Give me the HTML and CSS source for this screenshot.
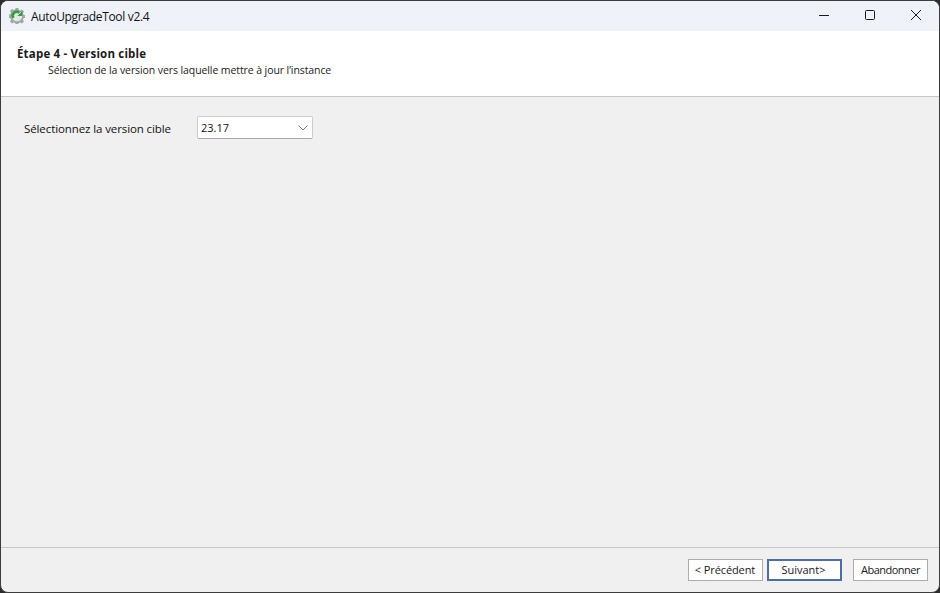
FILE: index.html
```html
<!DOCTYPE html>
<html lang="fr">
<head>
<meta charset="utf-8">
<title>AutoUpgradeTool v2.4</title>
<link rel="stylesheet" href="styles.css">
</head>
<body>
<div class="window">
  <div class="titlebar">
    <svg class="app-icon" width="16" height="16" viewBox="0 0 16 16">
      <path fill="#a4a6a4" d="M6.6 0h2.800l.4 2 1.500.6 1.700-1.100 2 2-1.100 1.700.6 1.500 2 .4v2.800l-2 .4-.6 1.500 1.100 1.700-2 2-1.700-1.100-1.500.6-.4 2H6.600l-.4-2-1.500-.6-1.700 1.100-2-2 1.100-1.700-.6-1.500-2-.4V6.600l2-.4.6-1.500-1.100-1.700 2-2 1.700 1.100 1.500-.6z"/>
      <circle cx="8" cy="8" r="5.200" fill="#e4e8e4"/>
      <path fill="none" stroke="#2f9e3f" stroke-width="2.600" d="M4.400 10A4 4 0 0 1 10.400 4.800"/>
      <path fill="#2f9e3f" d="M8.400 8h5V3z"/>
    </svg>
    <span class="app-title">AutoUpgradeTool v2.4</span>
    <div class="controls">
      <svg class="ctl" width="46" height="30" viewBox="0 0 46 30"><path d="M18 14.500h10" stroke="#1a1a1a" fill="none"/></svg>
      <svg class="ctl" width="46" height="30" viewBox="0 0 46 30"><rect x="18.500" y="9.500" width="9" height="9" rx="1" fill="none" stroke="#1a1a1a"/></svg>
      <svg class="ctl" width="46" height="30" viewBox="0 0 46 30"><path d="M18 9l10 10M28 9L18 19" stroke="#1a1a1a" fill="none"/></svg>
    </div>
  </div>
  <header class="step-header">
    <div class="step-title">Étape 4 - Version cible</div>
    <div class="step-sub">Sélection de la version vers laquelle mettre à jour l’instance</div>
  </header>
  <main class="content">
    <label class="field-label">Sélectionnez la version cible</label>
    <div class="combo">
      <span>23.17</span>
      <svg class="combo-arrow" width="10" height="6" viewBox="0 0 10 6"><path d="M.5.500L5 5 9.500.500" fill="none" stroke="#777"/></svg>
    </div>
  </main>
  <footer class="footer">
    <button class="btn btn-prev">&lt; Précédent</button>
    <button class="btn btn-next">Suivant&gt;</button>
    <button class="btn btn-abort">Abandonner</button>
  </footer>
</div>
</body>
</html>
```
FILE: styles.css
```css
html, body {
  margin: 0;
  height: 100%;
  background: #2c2c2c;
  overflow: hidden;
}
.window {
  box-sizing: border-box;
  width: 940px;
  height: 593px;
  border: 1px solid #3c3c3c;
  border-radius: 8px;
  background: #f0f0f0;
  display: flex;
  flex-direction: column;
  overflow: hidden;
  font-family: "Open Sans", "Noto Sans", sans-serif;
  font-size: 11.500px;
  color: #1a1a1a;
}
.titlebar {
  height: 30px;
  flex: none;
  background: #eff2f9;
  display: flex;
  align-items: center;
  padding-left: 8px;
}
.app-icon { flex: none; }
.app-title {
  margin-left: 6px;
  font-size: 12px;
  letter-spacing: -.32px;
  color: #111;
}
.controls {
  margin-left: auto;
  display: flex;
}
.ctl { display: block; }
.step-header {
  height: 66px;
  flex: none;
  box-sizing: border-box;
  background: #fff;
  border-bottom: 1px solid #c8c8c8;
  padding: 15px 0 0 16px;
}
.step-title {
  font-size: 11.500px;
  font-weight: 700;
  line-height: 15px;
  letter-spacing: .18px;
  color: #1a1a1a;
}
.step-sub {
  margin-left: 31px;
  padding-top: 1px;
  line-height: 16px;
  font-size: 10.500px;
  letter-spacing: -.09px;
  color: #222;
}
.content {
  flex: 1;
  display: flex;
  align-items: flex-start;
  padding: 19px 0 0 23px;
}
.field-label {
  width: 173px;
  line-height: 26px;
  font-size: 11.500px;
  letter-spacing: -.1px;
  color: #111;
}
.combo {
  box-sizing: border-box;
  width: 116px;
  height: 23px;
  background: #fff;
  border: 1px solid #ccc;
  border-bottom-color: #aaa;
  border-radius: 2px;
  display: flex;
  align-items: center;
  justify-content: space-between;
  padding: 0 4px 0 3px;
  font-size: 11px;
  color: #111;
}
.footer {
  height: 45px;
  flex: none;
  box-sizing: border-box;
  border-top: 1px solid #c8c8c8;
  display: flex;
  align-items: flex-start;
  padding: 11px 11px 0 0;
  justify-content: flex-end;
}
.btn {
  box-sizing: border-box;
  height: 22px;
  width: 75px;
  padding: 0 0 2px;
  background: #fff;
  border: 1px solid #adadad;
  font: inherit;
  font-size: 11px;
  color: #1a1a1a;
}
.btn-prev { letter-spacing: -.1px; padding-right: 1px; }
.btn-abort { letter-spacing: -.5px; }
.btn-next {
  border: 2px solid #4d6ea5;
  margin: 0 11px 0 4px;
  padding-right: 2px;
}
```
